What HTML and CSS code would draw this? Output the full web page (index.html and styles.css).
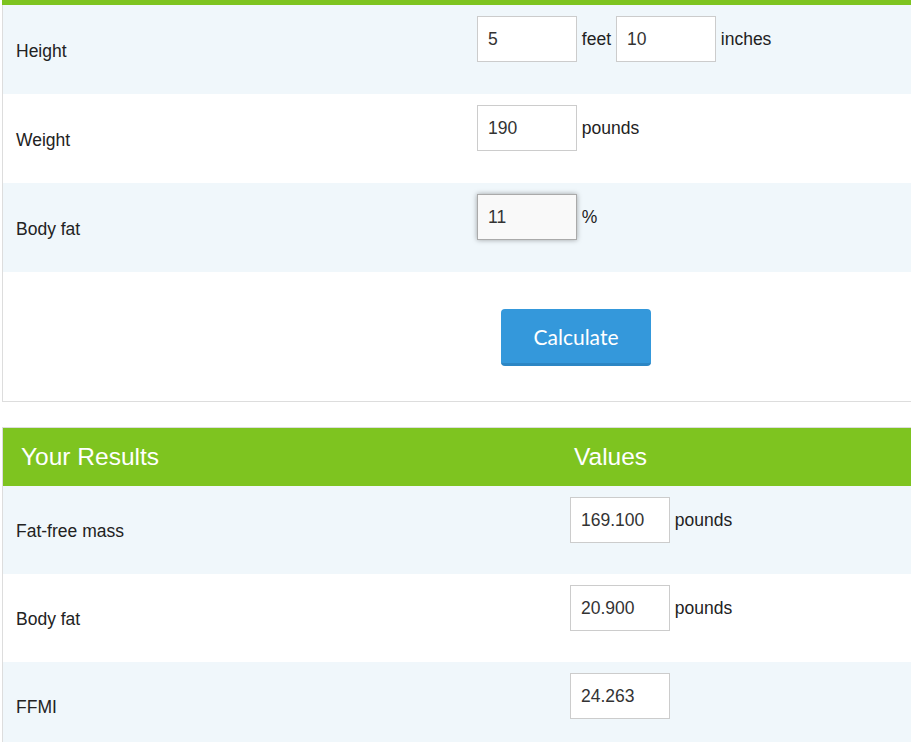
FILE: index.html
```html
<!DOCTYPE html>
<html lang="en">
<head>
  <meta charset="UTF-8">
  <meta name="viewport" content="width=device-width, initial-scale=1.0">
  <title>FFMI Calculator</title>
  <link rel="stylesheet" href="styles.css">
</head>
<body>
  <div class="calc-table form-table">
    <div class="table-top"></div>
    <div class="row shaded">
      <div class="label">Height</div>
      <div class="value">
        <input class="field" type="text" value="5"> feet <input class="field" type="text" value="10"> inches
      </div>
    </div>
    <div class="row">
      <div class="label">Weight</div>
      <div class="value">
        <input class="field" type="text" value="190"> pounds
      </div>
    </div>
    <div class="row shaded">
      <div class="label">Body fat</div>
      <div class="value">
        <input class="field focused" type="text" value="11"> %
      </div>
    </div>
    <div class="row button-row">
      <div class="label"></div>
      <div class="value">
        <button class="calculate" type="button">Calculate</button>
      </div>
    </div>
  </div>

  <div class="calc-table results-table">
    <div class="row header">
      <div class="label">Your Results</div>
      <div class="value">Values</div>
    </div>
    <div class="row shaded">
      <div class="label">Fat-free mass</div>
      <div class="value">
        <input class="field" type="text" value="169.100" readonly> pounds
      </div>
    </div>
    <div class="row">
      <div class="label">Body fat</div>
      <div class="value">
        <input class="field" type="text" value="20.900" readonly> pounds
      </div>
    </div>
    <div class="row shaded">
      <div class="label">FFMI</div>
      <div class="value">
        <input class="field" type="text" value="24.263" readonly>
      </div>
    </div>
  </div>
</body>
</html>
```

FILE: styles.css
```css
body {
  font-family: 'Liberation Sans', Arial, sans-serif;
  font-size: 17.5px;
  color: #222;
  background-color: #fff;
  margin: 0;
  padding: 0;
  overflow: hidden;
}

.calc-table {
  width: 930px;
  margin-left: 2px;
  border: 1px solid #ddd;
  border-top: none;
  box-sizing: border-box;
}

.table-top {
  height: 5px;
  background-color: #7ec420;
  margin-left: -1px;
}

.row {
  display: grid;
  height: 89px;
}

.row.shaded {
  background-color: #f0f7fb;
}

.form-table .row {
  grid-template-columns: 474px 1fr;
}

.results-table {
  margin-top: 25px;
  border-top: 1px solid #ddd;
}

.results-table .row {
  grid-template-columns: 567px 1fr;
  height: 88px;
}

.label {
  display: flex;
  align-items: center;
  padding-left: 13px;
  padding-top: 3px;
}

.value {
  padding-top: 11px;
}

.field {
  width: 100px;
  height: 46px;
  box-sizing: border-box;
  padding: 0 10px;
  border: 1px solid #ccc;
  background-color: #fff;
  font-family: 'Liberation Sans', Arial, sans-serif;
  font-size: 17.5px;
  color: #333;
  vertical-align: baseline;
  outline: none;
}

.field.focused {
  background-color: #f9f9f9;
  border-color: #aaa;
  box-shadow: 0 0 5px rgba(0, 0, 0, 0.35);
}

.button-row {
  height: 129px !important;
}

.calculate {
  margin-top: 26px;
  margin-left: 24px;
  width: 150px;
  height: 57px;
  background-color: #3498db;
  color: #fff;
  border: none;
  border-bottom: 3px solid #2c86c4;
  border-radius: 4px;
  font-family: 'Lato', sans-serif;
  font-size: 21px;
  cursor: pointer;
}

.results-table .row.header {
  height: 58px;
  background-color: #7ec420;
  color: #fff;
  font-size: 24.5px;
}

.header .label {
  padding-left: 18px;
  padding-top: 0;
}

.header .value {
  padding-top: 0;
  padding-left: 4px;
  display: flex;
  align-items: center;
}
```
